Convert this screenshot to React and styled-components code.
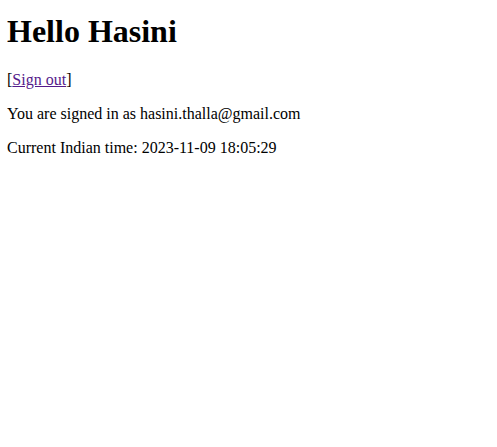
import React from 'react';
import styled, { createGlobalStyle } from 'styled-components';

const GlobalStyle = createGlobalStyle`
  body {
    margin: 0 8px 8px 7px;
    font-family: 'Liberation Serif', 'Times New Roman', serif;
    color: #000;
    background: #fff;
  }
`;

const Page = styled.div`
  font-size: 16px;
  padding-top: 13px;
`;

const Title = styled.h1`
  font-size: 32px;
  font-weight: bold;
  margin: 0 0 21.44px;
`;

const Line = styled.p`
  margin: 16px 0;
`;

const SignOut = styled.a`
  color: #551a8b;
  text-decoration: underline;
  cursor: pointer;
`;

export default function App() {
  return (
    <Page>
      <GlobalStyle />
      <Title>Hello Hasini</Title>
      <Line>
        [<SignOut href="#">Sign out</SignOut>]
      </Line>
      <Line>You are signed in as hasini.thalla@gmail.com</Line>
      <Line>Current Indian time: 2023-11-09 18:05:29</Line>
    </Page>
  );
}
